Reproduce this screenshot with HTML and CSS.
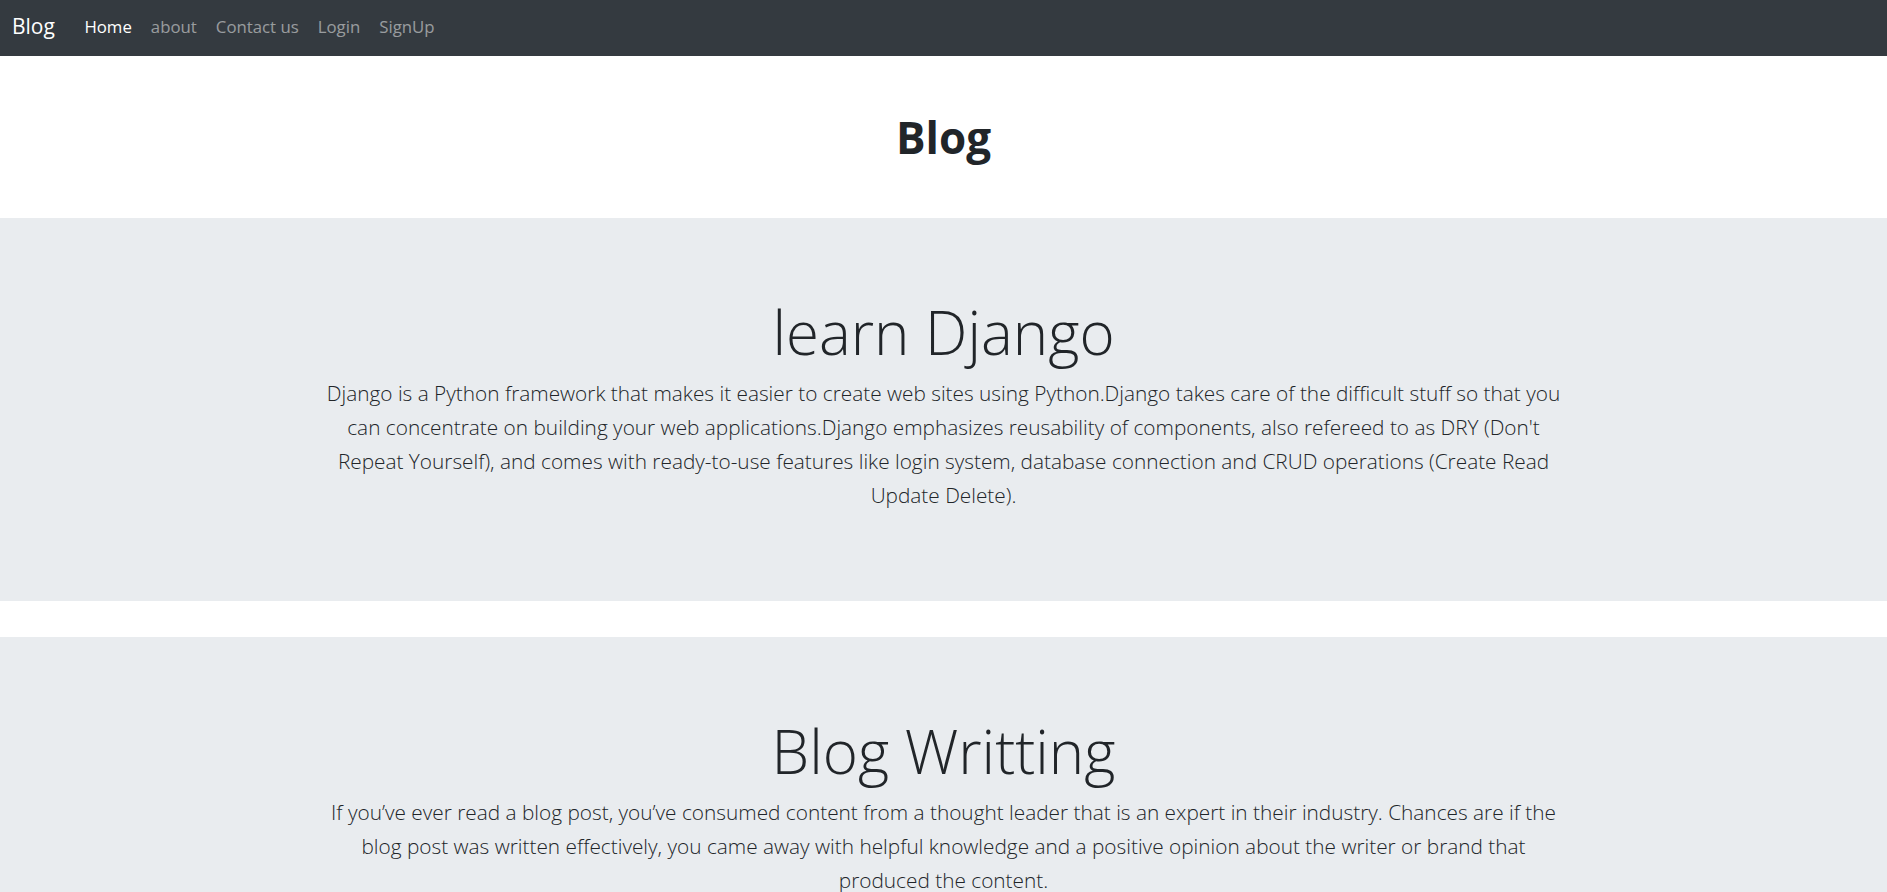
FILE: index.html
```html
<!DOCTYPE html>
<html lang="en">
<head>
<meta charset="utf-8">
<title>Blog</title>
<link rel="stylesheet" href="styles.css">
</head>
<body>
<nav class="navbar">
  <a class="brand" href="#">Blog</a>
  <ul class="nav">
    <li><a class="nav-link active" href="#">Home</a></li>
    <li><a class="nav-link" href="#">about</a></li>
    <li><a class="nav-link" href="#">Contact us</a></li>
    <li><a class="nav-link" href="#">Login</a></li>
    <li><a class="nav-link" href="#">SignUp</a></li>
  </ul>
</nav>
<header class="page-head">
  <h1 class="page-title">Blog</h1>
</header>
<main>
  <section class="jumbotron">
    <div class="inner">
      <h2 class="display">learn Django</h2>
      <p class="lead">Django is a Python framework that makes it easier to create web sites using Python.Django takes care of the difficult stuff so that you can concentrate on building your web applications.Django emphasizes reusability of components, also refereed to as DRY (Don't Repeat Yourself), and comes with ready-to-use features like login system, database connection and CRUD operations (Create Read Update Delete).</p>
    </div>
  </section>
  <section class="jumbotron">
    <div class="inner">
      <h2 class="display">Blog Writting</h2>
      <p class="lead">If you’ve ever read a blog post, you’ve consumed content from a thought leader that is an expert in their industry. Chances are if the blog post was written effectively, you came away with helpful knowledge and a positive opinion about the writer or brand that produced the content.</p>
    </div>
  </section>
</main>
</body>
</html>
```
FILE: styles.css
```css
* { box-sizing: border-box; }
html, body { margin: 0; padding: 0; }
body {
  font-family: "Open Sans", "Noto Sans", sans-serif;
  color: #212529;
  background: #fff;
}
.navbar {
  display: flex;
  align-items: center;
  height: 56px;
  padding: 0 12px 4px;
  background: #343a40;
}
.brand {
  color: #fff;
  font-size: 21px;
  text-decoration: none;
  margin-right: 20px;
}
.nav {
  display: flex;
  list-style: none;
  margin: 0;
  padding: 0;
}
.nav-link {
  display: block;
  padding: 8px 9.5px;
  font-size: 16.8px;
  color: rgba(255, 255, 255, 0.5);
  text-decoration: none;
}
.nav-link.active { color: #fff; }
.page-head {
  height: 162px;
  display: flex;
  align-items: center;
  justify-content: center;
}
.page-title {
  margin: 0;
  font-size: 44px;
  font-weight: 700;
  line-height: 1.2;
}
.jumbotron {
  background: #e9ecef;
  padding: 78px 16px 73px;
  margin-bottom: 36px;
  text-align: center;
}
.inner {
  max-width: 1245px;
  margin: 0 auto;
}
.display {
  margin: 0 0 8px;
  font-size: 60px;
  font-weight: 300;
  line-height: 72px;
}
.lead {
  margin: 0 0 16px;
  font-size: 20.8px;
  font-weight: 300;
  line-height: 34px;
}
```
